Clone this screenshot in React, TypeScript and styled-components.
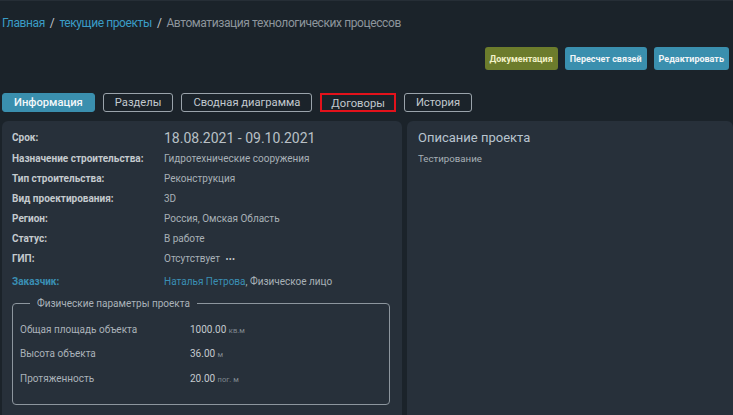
import styled, { createGlobalStyle } from 'styled-components';

const GlobalStyle = createGlobalStyle`
	html, body {
		margin: 0;
		padding: 0;
		background: #1b232a;
		font-family: Roboto, 'Noto Sans', sans-serif;
	}
	* {
		box-sizing: border-box;
	}
`;

const info = [
	{ label: 'Назначение строительства:', value: 'Гидротехнические сооружения' },
	{ label: 'Тип строительства:', value: 'Реконструкция' },
	{ label: 'Вид проектирования:', value: '3D' },
	{ label: 'Регион:', value: 'Россия, Омская Область' },
	{ label: 'Статус:', value: 'В работе' },
];

const params = [
	{ label: 'Общая площадь объекта', value: '1000.00', unit: 'кв.м' },
	{ label: 'Высота объекта', value: '36.00', unit: 'м' },
	{ label: 'Протяженность', value: '20.00', unit: 'пог. м' },
];

const tabs = ['Информация', 'Разделы', 'Сводная диаграмма', 'Договоры', 'История'];

export default function App() {
	return (
		<Page>
			<GlobalStyle />
			<Breadcrumbs>
				<Crumb>Главная</Crumb>
				<Sep>/</Sep>
				<Crumb>текущие проекты</Crumb>
				<Sep>/</Sep>
				<Current>Автоматизация технологических процессов</Current>
			</Breadcrumbs>
			<Actions>
				<ActionButton $variant='olive'>Документация</ActionButton>
				<ActionButton>Пересчет связей</ActionButton>
				<ActionButton>Редактировать</ActionButton>
			</Actions>
			<Tabs>
				{tabs.map((t, i) => (
					<Tab key={t} $active={i === 0} $marked={t === 'Договоры'}>
						{t}
					</Tab>
				))}
			</Tabs>
			<Content>
				<Panel>
					<InfoGrid>
						<Label $first>Срок:</Label>
						<Term>18.08.2021 - 09.10.2021</Term>
						{info.map((row) => (
							<Row key={row.label}>
								<Label>{row.label}</Label>
								<Value>{row.value}</Value>
							</Row>
						))}
						<Row>
							<Label $tall>ГИП:</Label>
							<Value $tall>
								Отсутствует <Dots>•••</Dots>
							</Value>
						</Row>
						<Row>
							<Label $link>Заказчик:</Label>
							<Value>
								<Link>Наталья Петрова</Link>, Физическое лицо
							</Value>
						</Row>
					</InfoGrid>
					<ParamsBox>
						<Legend>Физические параметры проекта</Legend>
						{params.map((p) => (
							<ParamRow key={p.label}>
								<ParamLabel>{p.label}</ParamLabel>
								<ParamValue>
									{p.value} <Unit>{p.unit}</Unit>
								</ParamValue>
							</ParamRow>
						))}
					</ParamsBox>
				</Panel>
				<Panel>
					<DescTitle>Описание проекта</DescTitle>
					<DescText>Тестирование</DescText>
				</Panel>
			</Content>
		</Page>
	);
}

const Page = styled.div`
	width: 733px;
	height: 415px;
	overflow: hidden;
	background: #1b232a;
	border-top: 1px solid #262e36;
	padding: 0 0 0 2px;
	display: flex;
	flex-direction: column;
`;

const Breadcrumbs = styled.div`
	display: flex;
	align-items: center;
	gap: 5px;
	height: 15px;
	margin-top: 15px;
	font-size: 12px;
	letter-spacing: -0.4px;
	line-height: 15px;
`;

const Crumb = styled.span`
	color: #3a9cc6;
`;

const Sep = styled.span`
	color: #c3c8cc;
`;

const Current = styled.span`
	color: #8d959c;
`;

const Actions = styled.div`
	display: flex;
	justify-content: flex-end;
	gap: 7px;
	padding-right: 4px;
	margin-top: 16px;
`;

const ActionButton = styled.button<{ $variant?: 'olive' }>`
	height: 23px;
	padding: 0 5px;
	border: none;
	border-radius: 3px;
	font-family: Roboto, sans-serif;
	font-size: 9px;
	font-weight: 700;
	background: ${({ $variant }) => ($variant === 'olive' ? '#6c7c2c' : '#3a8fae')};
	color: ${({ $variant }) => ($variant === 'olive' ? '#f2f2c8' : '#f2f6f8')};
`;

const Tabs = styled.div`
	display: flex;
	gap: 8px;
	margin-top: 23px;
`;

const Tab = styled.button<{ $active?: boolean; $marked?: boolean }>`
	height: 19px;
	padding: 0 ${({ $marked }) => ($marked ? '9px' : '11px')};
	font-family: Roboto, sans-serif;
	font-size: 11.2px;
	line-height: 17px;
	font-weight: ${({ $active }) => ($active ? 500 : 400)};
	background: ${({ $active }) => ($active ? '#3a8fae' : 'transparent')};
	color: ${({ $active }) => ($active ? '#f4f7f9' : '#c2c9cf')};
	border: ${({ $active, $marked }) =>
		$active ? '1px solid #3a8fae' : $marked ? '2px solid #e3121b' : '1px solid #9aa3ab'};
	border-radius: ${({ $marked }) => ($marked ? '0' : '3px')};
`;

const Content = styled.div`
	display: grid;
	grid-template-columns: 400px 1fr;
	gap: 5px;
	margin-top: 9px;
	flex: 1;
`;

const Panel = styled.div`
	background: #27303a;
	border-radius: 6px 6px 0 0;
	padding: 7px 10px 0;
`;

const InfoGrid = styled.div`
	display: grid;
	grid-template-columns: 152px 1fr;
	align-items: center;
`;

const Row = styled.div`
	display: contents;
`;

const Label = styled.div<{ $link?: boolean; $first?: boolean; $tall?: boolean }>`
	font-size: 10px;
	font-weight: 700;
	height: ${({ $first, $tall }) => ($first ? '21px' : $tall ? '23px' : '20px')};
	line-height: 20px;
	color: ${({ $link }) => ($link ? '#3a8fb4' : '#c4cace')};
`;

const Term = styled.div`
	font-size: 14px;
	color: #b9c0c6;
	height: 21px;
	line-height: 21px;
`;

const Value = styled.div<{ $tall?: boolean }>`
	font-size: 10px;
	color: #a8b0b7;
	height: ${({ $tall }) => ($tall ? '23px' : '20px')};
	line-height: 20px;
	white-space: nowrap;
`;

const Dots = styled.span`
	font-size: 9px;
	letter-spacing: 0.2px;
	color: #c4cace;
	margin-left: 3px;
`;

const Link = styled.span`
	color: #3a8fb4;
`;

const ParamsBox = styled.fieldset`
	margin: 6px 0 0 0;
	width: 378px;
	height: 107px;
	border: 1px solid #8d969e;
	border-radius: 4px;
	padding: 8px 7px 0;
`;

const Legend = styled.legend`
	font-size: 10px;
	color: #aab2b9;
	padding: 0 7px;
	margin-left: 10px;
`;

const ParamRow = styled.div`
	display: grid;
	grid-template-columns: 170px 1fr;
	height: 24.5px;
	align-items: center;
`;

const ParamLabel = styled.div`
	font-size: 10px;
	color: #aab2b9;
`;

const ParamValue = styled.div`
	font-size: 10px;
	color: #c4cace;
`;

const Unit = styled.span`
	font-size: 7.5px;
	color: #7f888f;
`;

const DescTitle = styled.div`
	font-size: 13px;
	color: #b8c4cf;
	line-height: 16px;
	margin-top: 2px;
	margin-left: 1px;
`;

const DescText = styled.div`
	font-size: 9.7px;
	color: #a8b0b7;
	margin-top: 7px;
	margin-left: 1px;
`;
